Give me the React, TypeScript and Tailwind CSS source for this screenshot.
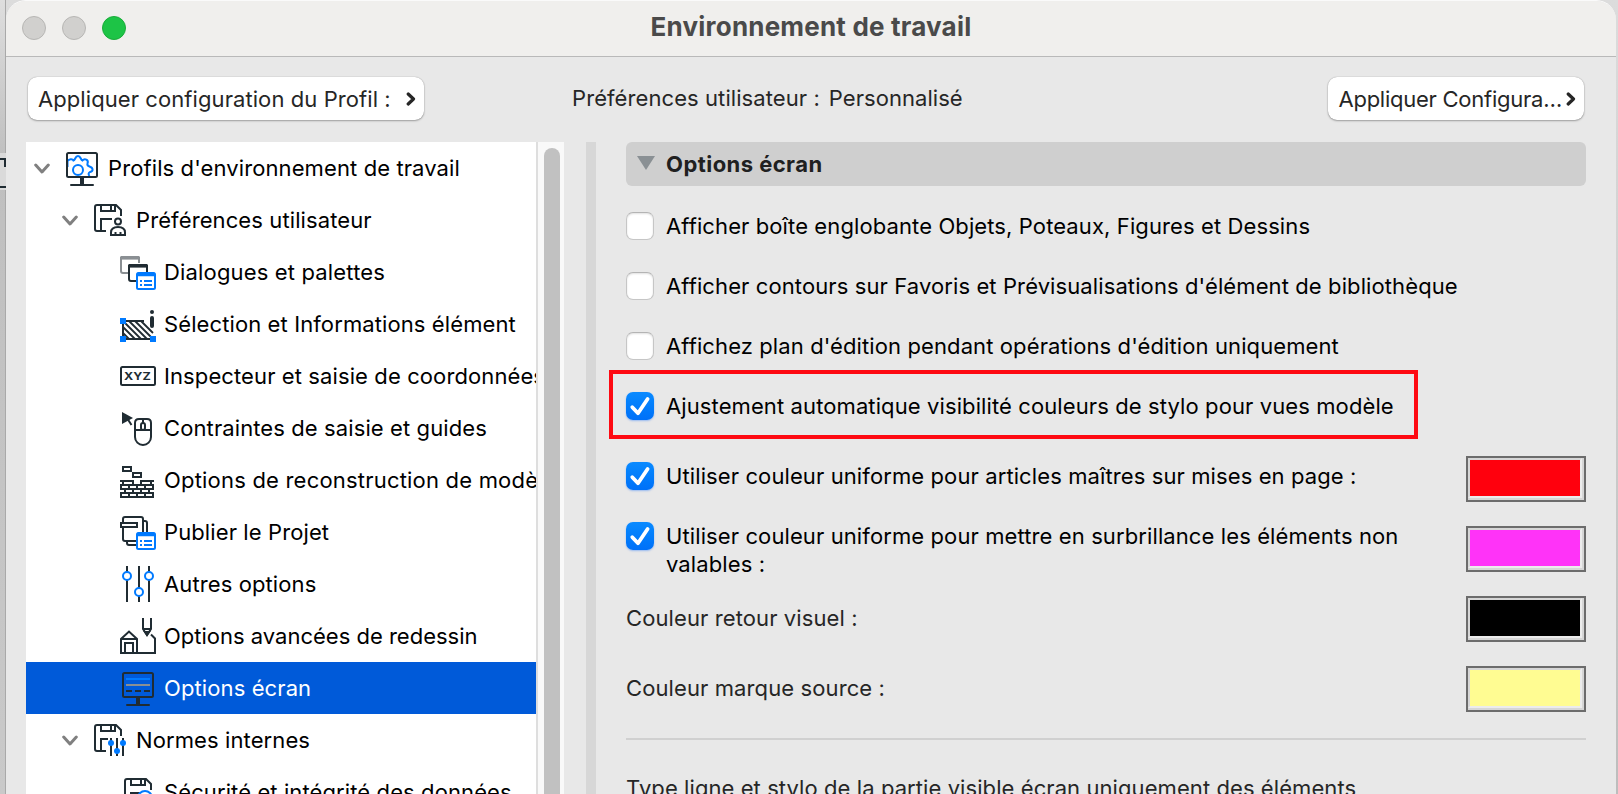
import React, { useState } from 'react';

const INK = '#202c33';
const BLUE = '#007aff';

const Icon = ({ children }: { children: React.ReactNode }) => (
    <svg width="36" height="36" viewBox="0 0 36 36" fill="none" stroke={INK} strokeWidth="2" className="shrink-0">
        {children}
    </svg>
);

const ListBadge = () => (
    <g>
        <rect x="17" y="19" width="18" height="16" rx="1.5" fill="#fff" stroke={BLUE} />
        <path d="M17 20.5H35" stroke={BLUE} strokeWidth="3.5" />
        <path d="M20 27H22M24 27H32M20 31H22M24 31H32" stroke={BLUE} />
    </g>
);

const Monitor = () => (
    <g>
        <rect x="3" y="3" width="30" height="24" rx="1.5" />
        <path d="M18 28V34" strokeWidth="4" />
        <path d="M7 35H29" strokeLinecap="round" />
    </g>
);

const Floppy = () => (
    <g>
        <path d="M14 29H5Q3 29 3 27V5Q3 3 5 3H24L29 8V14" />
        <path d="M9 3V9H23V3M19 4V8" />
        <path d="M9 28V17H20" />
    </g>
);

const ProfileIcon = () => (
    <Icon>
        <path stroke={BLUE} d="M3.5 17V11C5 9 8.5 8.5 9.5 10.5C11.5 10 11 6 14 6C17 6 16.5 10 18.5 10.5C20.5 8 25 9.5 23.5 13.5C23 15 24 16 25.5 16.5C29.5 18 29.5 21 26 22C24.5 23 24 24 25.5 26" />
        <circle cx="14" cy="20" r="5" stroke={BLUE} />
        <Monitor />
    </Icon>
);

const UserIcon = () => (
    <Icon>
        <Floppy />
        <circle cx="26" cy="19.5" r="3" />
        <path d="M19 33V30.5Q19 25 26 25Q33 25 33 30.5V33ZM23.5 30V33M28.5 30V33" />
    </Icon>
);

const DialogIcon = () => (
    <Icon>
        <path d="M8 19H3Q1 19 1 17V4H19V9M1 4H19" stroke="#8a8f93" />
        <path d="M0.5 3.8H19.5" stroke="#8a8f93" strokeWidth="3.6" />
        <path d="M16 27H11Q9 27 9 25V12H27V18" />
        <path d="M8.5 11.8H27.5" strokeWidth="3.6" />
        <ListBadge />
    </Icon>
);

const SelectionIcon = () => (
    <Icon>
        <path d="M6 15H24M3 18V31M6 33H30" />
        <path d="M3 27L9 33M3 21L15 33M3 15L21 33M9 15L27 33M15 15L32 32M21 15L33 27" strokeWidth="1.8" />
        <path d="M0 12H6V18H0ZM0 30H6V36H0ZM30 30H36V36H30Z" fill={BLUE} stroke="none" />
        <circle cx="32" cy="6" r="2" fill={INK} stroke="none" />
        <path d="M32 12V20" strokeWidth="4" strokeLinecap="round" />
    </Icon>
);

const XyzIcon = () => (
    <Icon>
        <rect x="1" y="9" width="34" height="18" rx="1.5" />
        <text x="4" y="22" textLength="27" lengthAdjust="spacingAndGlyphs" className="font-['Inter',sans-serif] text-[11px] font-bold" fill={INK} stroke="none">XYZ</text>
    </Icon>
);

const MouseIcon = () => (
    <Icon>
        <path d="M2 2V14L13 8Z" fill={INK} stroke="none" />
        <path d="M7 8L11.5 15" />
        <path d="M19 9H27Q31 9 31 13V27A8 8 0 0 1 15 27V13Q15 9 19 9ZM15 20H31" />
        <rect x="21" y="13" width="4" height="7" rx="2" fill="#fff" />
        <path d="M23 9V13" />
    </Icon>
);

const BricksIcon = () => (
    <Icon>
        <rect x="3" y="5" width="8" height="4" />
        <rect x="13" y="11" width="8" height="4" />
        <path d="M0 19H14M20 19H34M0 23H34M0 27H34M0 31H34M0 35H34" />
        <path d="M3 19V23M13 19V23M21 19V23M31 19V23M1 23V27M9 23V27M17 23V27M25 23V27M33 23V27M5 27V31M13 27V31M21 27V31M29 27V31M1 31V35M9 31V35M17 31V35M25 31V35M33 31V35" />
    </Icon>
);

const PublishIcon = () => (
    <Icon>
        <path d="M3 8V5Q3 3 5 3H21Q23 3 23 5V18M3 14V25Q3 27 5 27H16" />
        <rect x="1" y="9" width="16" height="4" />
        <path d="M23 7H25Q27 7 27 9V18M7 27V29Q7 31 9 31H16" />
        <ListBadge />
    </Icon>
);

const SlidersIcon = () => (
    <Icon>
        <path d="M7 0V36M19 0V36M29 0V36" />
        <g fill="#fff" stroke={BLUE}>
            <circle cx="7" cy="10" r="4" />
            <circle cx="19" cy="26" r="4" />
            <circle cx="29" cy="10" r="4" />
        </g>
    </Icon>
);

const RedrawIcon = () => (
    <Icon>
        <path d="M1 35V21L9 13.5L17 21V35M1 21H17M5 35V25H13V35" />
        <path d="M0 35H35V20.5L31 16.5" />
        <path d="M23 0V11L27 17L31 11V0M23 11H31" />
        <path d="M25 14H29L27 17Z" fill={INK} />
    </Icon>
);

const ScreenIcon = () => (
    <Icon>
        <Monitor />
        <path d="M6 9H30" stroke={BLUE} />
        <path d="M6 15H30" stroke="#8a8f93" />
        <path d="M6 21H12M15 21H21M24 21H30" />
    </Icon>
);

const NormsIcon = () => (
    <Icon>
        <path d="M14 29H5Q3 29 3 27V5Q3 3 5 3H24L29 8V14M9 3V9H23V3M19 4V8M9 28V17H16" />
        <path d="M19 16V34M25 16V34M31 16V34" />
        <g fill={BLUE} stroke="none">
            <circle cx="19" cy="21" r="3" />
            <circle cx="25" cy="29" r="3" />
            <circle cx="31" cy="21" r="3" />
        </g>
    </Icon>
);

const SecurityIcon = () => (
    <Icon>
        <g transform="translate(2 2)">
            <Floppy />
        </g>
        <circle cx="25" cy="24" r="7" fill="#fff" stroke={BLUE} />
    </Icon>
);

const tree = [
    { label: "Profils d'environnement de travail", level: 1, icon: ProfileIcon },
    { label: 'Préférences utilisateur', level: 2, icon: UserIcon },
    { label: 'Dialogues et palettes', level: 3, icon: DialogIcon, spacing: 'tracking-[0.16px]' },
    { label: 'Sélection et Informations élément', level: 3, icon: SelectionIcon },
    { label: 'Inspecteur et saisie de coordonnées', level: 3, icon: XyzIcon },
    { label: 'Contraintes de saisie et guides', level: 3, icon: MouseIcon },
    { label: 'Options de reconstruction de modèle', level: 3, icon: BricksIcon, spacing: 'tracking-[0.2px]' },
    { label: 'Publier le Projet', level: 3, icon: PublishIcon },
    { label: 'Autres options', level: 3, icon: SlidersIcon },
    { label: 'Options avancées de redessin', level: 3, icon: RedrawIcon, spacing: 'tracking-normal' },
    { label: 'Options écran', level: 3, icon: ScreenIcon },
    { label: 'Normes internes', level: 2, icon: NormsIcon },
    { label: 'Sécurité et intégrité des données', level: 3, icon: SecurityIcon },
];

const indent: Record<number, string> = {
    1: 'pl-2',
    2: 'pl-9',
    3: 'pl-[94px]',
};

const Sidebar = () => {
    const [selected, setSelected] = useState('Options écran');

    return (
        <div className="w-[510px] shrink-0 overflow-hidden bg-white">
            {tree.map(({ label, level, icon: ItemIcon, spacing = '' }) => (
                <div key={label} onClick={() => setSelected(label)}
                    className={`flex h-[52px] items-center whitespace-nowrap ${indent[level]} ${selected === label ? 'bg-[#005ad9] text-white' : 'text-black'}`}>
                    {level < 3 && (
                        <svg width="16" height="12" viewBox="0 0 16 12" fill="none" stroke="#808080" strokeWidth="3" strokeLinecap="round" strokeLinejoin="round" className="mt-0.5 mr-[14px] shrink-0">
                            <path d="M1.7 2L8 9L14.3 2" />
                        </svg>
                    )}
                    <ItemIcon />
                    <span className={`ml-2 ${spacing}`}>{label}</span>
                </div>
            ))}
        </div>
    );
};

const Check = ({ label, defaultChecked = false }: { label: string; defaultChecked?: boolean }) => {
    const [checked, setChecked] = useState(defaultChecked);

    return (
        <div className="flex items-start gap-3 text-black" onClick={() => setChecked(!checked)}>
            {checked ? (
                <span className="h-7 w-7 shrink-0 rounded-[7px] bg-linear-to-b from-[#0a8aff] to-[#0070f8] shadow-[0_1px_2px_rgba(0,100,255,0.35)]">
                    <svg width="28" height="28" viewBox="0 0 28 28" fill="none" stroke="#fff" strokeWidth="3.8" strokeLinecap="round" strokeLinejoin="round">
                        <path d="M6.3 15.2L12 21.2L21.6 7" />
                    </svg>
                </span>
            ) : (
                <span className="h-7 w-7 shrink-0 rounded-[7px] border border-[#c6c6c6] border-t-[#b4b4b4] bg-white shadow-[inset_0_1px_2px_rgba(0,0,0,0.12)]" />
            )}
            <span className="whitespace-pre-line">{label}</span>
        </div>
    );
};

const Swatch = ({ color }: { color: string }) => (
    <div className="h-[46px] w-[120px] border-2 border-[#6c6c6c] bg-[#d6d6d6] pr-0.5 pb-0.5">
        <div className="h-full w-full border-2 border-t-[#d6d6d6] border-r-[#ececec] border-b-[#ececec] border-l-[#d6d6d6]">
            <div className={`h-full w-full ${color}`} />
        </div>
    </div>
);

const Chevron = () => (
    <svg width="10" height="14" viewBox="0 0 10 14" fill="none" stroke="#262626" strokeWidth="3.2" strokeLinecap="round" strokeLinejoin="round" className="shrink-0">
        <path d="M2.2 2L7.5 7L2.2 12" />
    </svg>
);

const App = () => {
    return (
        <div className="flex h-[794px] w-[1618px] overflow-hidden bg-linear-to-b from-[#dcdcdc] to-[#bdbdbd] font-['Inter',sans-serif] text-[22px] leading-7 tracking-[0.105px] text-[#262626]">
            <div className="flex w-[6px] shrink-0 flex-col border-r border-[#a9a9a9] bg-linear-to-b from-[#dedede] via-[#bfbfbf] via-20% to-[#c9c9c9] pt-[153px]">
                <svg width="6" height="37" viewBox="0 0 6 37">
                    <rect width="6" height="37" fill="#dadada" />
                    <path d="M0 6H6M5 6V14M0 34H6" stroke={INK} strokeWidth="2" />
                </svg>
            </div>

            <div className="flex w-[1610px] shrink-0 flex-col overflow-hidden rounded-t-[20px] border-t border-[#fafafa] bg-[#e8e8e8]">
                <div className="relative flex h-14 shrink-0 items-center justify-center border-b border-[#b9b9b9] bg-[#f0efed]">
                    <div className="absolute top-[15px] left-4 flex gap-4">
                        <span className="h-6 w-6 rounded-full border border-[#b7b6b4] bg-[#d1d0ce]" />
                        <span className="h-6 w-6 rounded-full border border-[#b7b6b4] bg-[#d1d0ce]" />
                        <span className="h-6 w-6 rounded-full border border-[#1aac3a] bg-[#1dc446]" />
                    </div>
                    <h1 className="pb-1 text-[26px] font-bold tracking-[0.2px] text-[#4a4a4a]">Environnement de travail</h1>
                </div>

                <div className="flex h-[85px] shrink-0 pt-5 pr-8 pl-[21.5px]">
                    <button className="flex h-[43px] w-[396px] items-center justify-between rounded-[9px] bg-white pr-2 pl-[10.5px] tracking-[0.08px] shadow-[0_0_1px_rgba(0,0,0,0.35),0_1px_2px_rgba(0,0,0,0.3)]">
                        Appliquer configuration du Profil :
                        <Chevron />
                    </button>
                    <p className="ml-[148.5px] flex gap-[9px] pt-[7px]">
                        <span className="tracking-[0.08px]">Préférences utilisateur :</span>
                        <span className="tracking-[0.05px]">Personnalisé</span>
                    </p>
                    <button className="ml-auto flex h-[43px] w-[256px] items-center justify-between rounded-[9px] bg-white pr-2 pl-[10.5px] tracking-[-0.25px] whitespace-nowrap shadow-[0_0_1px_rgba(0,0,0,0.35),0_1px_2px_rgba(0,0,0,0.3)]">
                        Appliquer Configura…
                        <Chevron />
                    </button>
                </div>

                <div className="flex min-h-0 flex-1 pl-5">
                    <Sidebar />
                    <div className="flex w-7 shrink-0 justify-center border-l-2 border-[#dedede] bg-[#f9f9f9] pt-1.5 pl-0.5">
                        <div className="w-4 rounded-t-full bg-[#c1c1c1]" />
                    </div>
                    <div className="ml-[22px] w-2.5 shrink-0 bg-[#d7d7d7]" />

                    <div className="ml-[30px] w-[960px] shrink-0">
                        <div className="flex h-11 items-center rounded-md bg-[#cfcfcf] pl-[11px]">
                            <svg width="18" height="14" viewBox="0 0 18 14" className="mb-0.5" fill="#8a9094">
                                <path d="M0 0H18L9 14Z" />
                            </svg>
                            <h2 className="ml-[11px] font-bold tracking-[0.45px] text-[#202020]">Options écran</h2>
                        </div>

                        <div className="mt-[26px] flex flex-col gap-8">
                            <Check label="Afficher boîte englobante Objets, Poteaux, Figures et Dessins" />
                            <Check label="Afficher contours sur Favoris et Prévisualisations d'élément de bibliothèque" />
                            <Check label="Affichez plan d'édition pendant opérations d'édition uniquement" />
                        </div>

                        <div className="mt-2.5 -ml-[17px] h-[69px] w-[809px] border-4 border-[#fe0a12] pt-[18px] pl-[13px]">
                            <Check label="Ajustement automatique visibilité couleurs de stylo pour vues modèle" defaultChecked />
                        </div>

                        <div className="mt-[17px] flex justify-between">
                            <div className="flex flex-col pt-1.5">
                                <Check label="Utiliser couleur uniforme pour articles maîtres sur mises en page :" defaultChecked />
                                <div className="mt-8">
                                    <Check label={'Utiliser couleur uniforme pour mettre en surbrillance les éléments non\nvalables :'} defaultChecked />
                                </div>
                                <p className="mt-[26px]">Couleur retour visuel :</p>
                                <p className="mt-[42px]">Couleur marque source :</p>
                            </div>
                            <div className="flex flex-col gap-6">
                                <Swatch color="bg-[#ff000d]" />
                                <Swatch color="bg-[#ff33f8]" />
                                <Swatch color="bg-black" />
                                <Swatch color="bg-[#fffc92]" />
                            </div>
                        </div>

                        <div className="mt-[26px] h-0.5 bg-[#d0d0d0]" />
                        <p className="mt-[34px] whitespace-nowrap tracking-[0.08px]">Type ligne et stylo de la partie visible écran uniquement des éléments</p>
                    </div>
                </div>
            </div>
        </div>
    );
};

export default App;
